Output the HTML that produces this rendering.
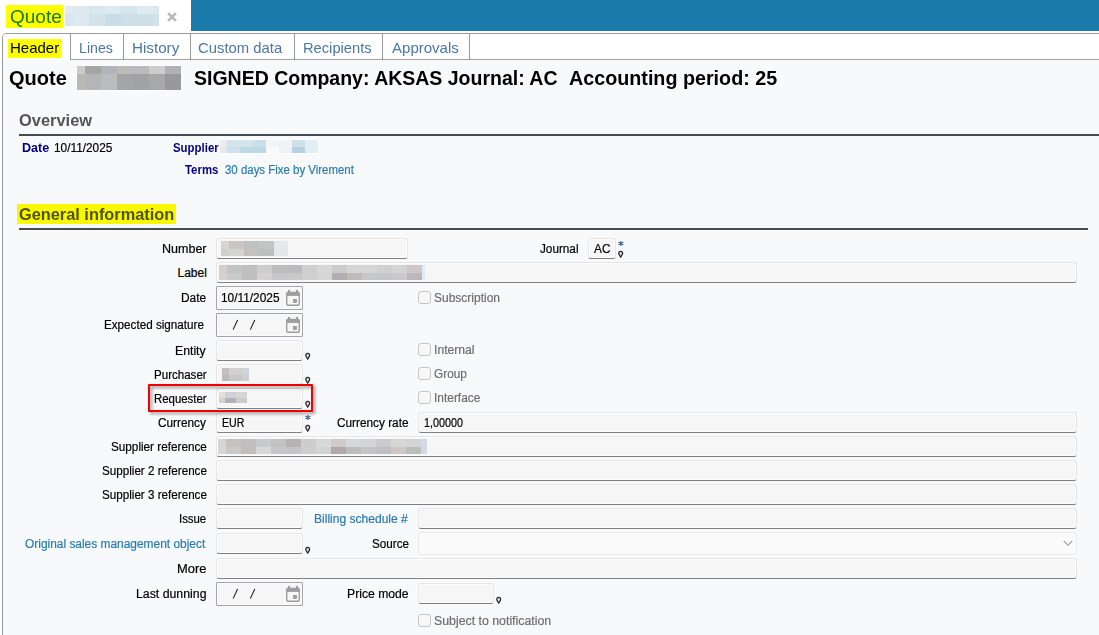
<!DOCTYPE html>
<html>
<head>
<meta charset="utf-8">
<title>Quote</title>
<style>
html,body{margin:0;padding:0;}
body{width:1099px;height:635px;overflow:hidden;background:#fff;position:relative;font-family:"Liberation Sans",sans-serif;}
.a{position:absolute;box-sizing:border-box;}
.t{position:absolute;white-space:pre;transform-origin:0 50%;display:block;}
.tb{position:absolute;box-sizing:border-box;background:#f6f6f6;border:1px solid #e6e6e6;border-bottom-color:#808080;border-radius:3px;box-shadow:inset 0 0 0 1px #fdfdfd;}
.dt{position:absolute;box-sizing:border-box;background:#f6f6f6;border:1px solid #a3a3aa;border-radius:1px;box-shadow:inset 0 0 0 1px #fbfbfb;}
.sel{position:absolute;box-sizing:border-box;background:#fafafa;border:1px solid #ebebeb;border-radius:3px;}
.cb{position:absolute;box-sizing:border-box;width:13px;height:13px;background:#f7f7f7;border:1px solid #c6c6c6;border-radius:3px;}
.px{position:absolute;}
svg{position:absolute;overflow:visible;}
.s{-webkit-text-stroke:0.2px currentColor;}
</style>
</head>
<body>
<!-- top application bar -->
<div class="a" style="left:191px;top:0;width:908px;height:31px;background:#1a7bab;"></div>
<div class="a" style="left:6px;top:5px;width:57px;height:23px;background:#ffff00;"></div>
<!-- close X -->
<svg style="left:166.5px;top:11.5px;" width="10" height="10" viewBox="0 0 10 10"><path d="M1.1 1.1 L8.9 8.9 M8.9 1.1 L1.1 8.9" stroke="#b9b9b9" stroke-width="2.7" fill="none"/></svg>

<!-- tab strip -->
<div class="a" style="left:70px;top:33px;width:1040px;height:27px;border-bottom:1px solid #a2a2a2;"></div>
<!-- content panel -->
<div class="a" style="left:2px;top:33px;width:1110px;height:620px;border-left:1px solid #969696;border-top:1px solid #9c9c9c;border-top-left-radius:5px;"></div>
<div class="a" style="left:3px;top:60px;width:1096px;height:575px;background:#f8f9fb;"></div>
<!-- active tab covers bottom line -->
<div class="a" style="left:3px;top:34px;width:67px;height:26px;background:#fff;border-top-left-radius:4px;"></div>
<div class="a" style="left:3px;top:59px;width:67px;height:1px;background:#fbfcfd;"></div>
<div class="a" style="left:8px;top:39px;width:53px;height:19px;background:#ffff00;"></div>
<!-- tab separators -->
<div class="a" style="left:70px;top:34px;width:1px;height:26px;background:#9a9a9a;"></div>
<div class="a" style="left:123px;top:34px;width:1px;height:26px;background:#9a9a9a;"></div>
<div class="a" style="left:190px;top:34px;width:1px;height:26px;background:#9a9a9a;"></div>
<div class="a" style="left:294px;top:34px;width:1px;height:26px;background:#9a9a9a;"></div>
<div class="a" style="left:382px;top:34px;width:1px;height:26px;background:#9a9a9a;"></div>
<div class="a" style="left:469px;top:34px;width:1px;height:26px;background:#9a9a9a;"></div>

<!-- section underlines -->
<div class="a" style="left:19px;top:134px;width:1080px;height:2px;background:#444b53;"></div>
<div class="a" style="left:17px;top:204px;width:159px;height:20px;background:#f8f900;"></div>
<div class="a" style="left:19px;top:228px;width:1069px;height:2px;background:#444b53;"></div>


<!-- form fields -->
<div class="tb" style="left:216px;top:238px;width:192px;height:21px;"></div>
<div class="tb" style="left:588px;top:238px;width:28px;height:21px;"></div>
<div class="tb" style="left:216px;top:262px;width:861px;height:21px;"></div>
<div class="dt" style="left:216px;top:286px;width:87px;height:24px;"></div>
<div class="dt" style="left:216px;top:313px;width:87px;height:24px;"></div>
<div class="tb" style="left:216px;top:340px;width:87px;height:21px;"></div>
<div class="tb" style="left:216px;top:364px;width:87px;height:21px;"></div>
<div class="tb" style="left:216px;top:388px;width:87px;height:21px;"></div>
<div class="tb" style="left:216px;top:412px;width:87px;height:21px;"></div>
<div class="tb" style="left:418px;top:412px;width:659px;height:21px;"></div>
<div class="tb" style="left:216px;top:436px;width:861px;height:21px;"></div>
<div class="tb" style="left:216px;top:460px;width:861px;height:21px;"></div>
<div class="tb" style="left:216px;top:484px;width:861px;height:21px;"></div>
<div class="tb" style="left:216px;top:508px;width:87px;height:21px;"></div>
<div class="tb" style="left:418px;top:508px;width:659px;height:21px;"></div>
<div class="tb" style="left:216px;top:533px;width:87px;height:21px;"></div>
<div class="sel" style="left:418px;top:532px;width:659px;height:23px;"></div>
<div class="tb" style="left:216px;top:558px;width:861px;height:21px;"></div>
<div class="dt" style="left:216px;top:582px;width:87px;height:24px;"></div>
<div class="tb" style="left:418px;top:583px;width:76px;height:21px;"></div>

<!-- BLURS -->
<div class="px" style="left:65px;top:6px;width:8px;height:8px;background:#e1ebf2"></div>
<div class="px" style="left:73px;top:6px;width:16px;height:8px;background:#dfe9f0"></div>
<div class="px" style="left:89px;top:6px;width:16px;height:8px;background:#d8e6ee"></div>
<div class="px" style="left:105px;top:6px;width:16px;height:8px;background:#deeaf0"></div>
<div class="px" style="left:121px;top:6px;width:16px;height:8px;background:#d5e5ed"></div>
<div class="px" style="left:137px;top:6px;width:16px;height:8px;background:#e0ebf1"></div>
<div class="px" style="left:153px;top:6px;width:6px;height:8px;background:#dce8f0"></div>
<div class="px" style="left:65px;top:14px;width:8px;height:12px;background:#d9e6ef"></div>
<div class="px" style="left:73px;top:14px;width:16px;height:12px;background:#dfe9f1"></div>
<div class="px" style="left:89px;top:14px;width:16px;height:12px;background:#d2e3eb"></div>
<div class="px" style="left:105px;top:14px;width:16px;height:12px;background:#c8dde8"></div>
<div class="px" style="left:121px;top:14px;width:16px;height:12px;background:#cddfe8"></div>
<div class="px" style="left:137px;top:14px;width:16px;height:12px;background:#cddfe8"></div>
<div class="px" style="left:153px;top:14px;width:6px;height:12px;background:#d3e3ec"></div>
<div class="px" style="left:76px;top:65px;width:106px;height:26px;background:#fdfdfe"></div>
<div class="px" style="left:77px;top:66px;width:8px;height:8px;background:#cdc9c6"></div>
<div class="px" style="left:85px;top:66px;width:16px;height:8px;background:#a4a6a5"></div>
<div class="px" style="left:101px;top:66px;width:16px;height:8px;background:#b3b4b9"></div>
<div class="px" style="left:117px;top:66px;width:16px;height:8px;background:#bbbbb9"></div>
<div class="px" style="left:133px;top:66px;width:16px;height:8px;background:#b9babd"></div>
<div class="px" style="left:149px;top:66px;width:16px;height:8px;background:#cccccc"></div>
<div class="px" style="left:165px;top:66px;width:16px;height:8px;background:#b1b2b5"></div>
<div class="px" style="left:77px;top:74px;width:8px;height:16px;background:#bab8b6"></div>
<div class="px" style="left:85px;top:74px;width:16px;height:16px;background:#b5b5b7"></div>
<div class="px" style="left:101px;top:74px;width:16px;height:16px;background:#bbbcbe"></div>
<div class="px" style="left:117px;top:74px;width:16px;height:16px;background:#a5a5a7"></div>
<div class="px" style="left:133px;top:74px;width:16px;height:16px;background:#a1a2a4"></div>
<div class="px" style="left:149px;top:74px;width:16px;height:16px;background:#a8a8a8"></div>
<div class="px" style="left:165px;top:74px;width:16px;height:16px;background:#99999b"></div>
<div class="px" style="left:219px;top:139px;width:100px;height:15px;background:#fdfdfe"></div>
<div class="px" style="left:220px;top:140px;width:7px;height:7px;background:#ebecf1"></div>
<div class="px" style="left:227px;top:140px;width:13px;height:7px;background:#d3e4ec"></div>
<div class="px" style="left:240px;top:140px;width:13px;height:7px;background:#d6e5ec"></div>
<div class="px" style="left:253px;top:140px;width:13px;height:7px;background:#cbdfe9"></div>
<div class="px" style="left:266px;top:140px;width:13px;height:7px;background:#f2f5fa"></div>
<div class="px" style="left:279px;top:140px;width:13px;height:7px;background:#f1f2f6"></div>
<div class="px" style="left:292px;top:140px;width:13px;height:7px;background:#cfe0e9"></div>
<div class="px" style="left:305px;top:140px;width:13px;height:7px;background:#e6eef5"></div>
<div class="px" style="left:220px;top:147px;width:7px;height:6px;background:#e7e8ed"></div>
<div class="px" style="left:227px;top:147px;width:13px;height:6px;background:#cde1ea"></div>
<div class="px" style="left:240px;top:147px;width:13px;height:6px;background:#bed8e5"></div>
<div class="px" style="left:253px;top:147px;width:13px;height:6px;background:#bed8e5"></div>
<div class="px" style="left:266px;top:147px;width:13px;height:6px;background:#f9fafc"></div>
<div class="px" style="left:279px;top:147px;width:13px;height:6px;background:#eff0f4"></div>
<div class="px" style="left:292px;top:147px;width:13px;height:6px;background:#b5d0e2"></div>
<div class="px" style="left:305px;top:147px;width:13px;height:6px;background:#e3edf4"></div>
<div class="px" style="left:221px;top:241px;width:8px;height:8px;background:#d8d6d4"></div>
<div class="px" style="left:229px;top:241px;width:15px;height:8px;background:#cbc6c5"></div>
<div class="px" style="left:244px;top:241px;width:15px;height:8px;background:#bfc1c0"></div>
<div class="px" style="left:259px;top:241px;width:15px;height:8px;background:#c3c4c6"></div>
<div class="px" style="left:274px;top:241px;width:14px;height:8px;background:#e7e8ea"></div>
<div class="px" style="left:221px;top:249px;width:8px;height:7px;background:#d0cecc"></div>
<div class="px" style="left:229px;top:249px;width:15px;height:7px;background:#d4d4d4"></div>
<div class="px" style="left:244px;top:249px;width:15px;height:7px;background:#c4c2bf"></div>
<div class="px" style="left:259px;top:249px;width:15px;height:7px;background:#bcbec1"></div>
<div class="px" style="left:274px;top:249px;width:14px;height:7px;background:#e6e7e9"></div>
<div class="px" style="left:219px;top:265px;width:8px;height:8px;background:#d4cfcd"></div>
<div class="px" style="left:227px;top:265px;width:15px;height:8px;background:#c3c3c3"></div>
<div class="px" style="left:242px;top:265px;width:15px;height:8px;background:#c0bebf"></div>
<div class="px" style="left:257px;top:265px;width:15px;height:8px;background:#cdcdcd"></div>
<div class="px" style="left:272px;top:265px;width:15px;height:8px;background:#bfbdbb"></div>
<div class="px" style="left:287px;top:265px;width:15px;height:8px;background:#bbbbbd"></div>
<div class="px" style="left:302px;top:265px;width:15px;height:8px;background:#d0cecf"></div>
<div class="px" style="left:317px;top:265px;width:15px;height:8px;background:#d7d7d7"></div>
<div class="px" style="left:332px;top:265px;width:15px;height:8px;background:#cccacb"></div>
<div class="px" style="left:347px;top:265px;width:15px;height:8px;background:#d6d5d5"></div>
<div class="px" style="left:362px;top:265px;width:15px;height:8px;background:#d6d5d5"></div>
<div class="px" style="left:377px;top:265px;width:15px;height:8px;background:#d0d0d0"></div>
<div class="px" style="left:392px;top:265px;width:15px;height:8px;background:#d4d4d4"></div>
<div class="px" style="left:407px;top:265px;width:15px;height:8px;background:#cdc8c6"></div>
<div class="px" style="left:422px;top:265px;width:2.5px;height:8px;background:#e0eaf5"></div>
<div class="px" style="left:219px;top:273px;width:8px;height:7px;background:#d5cfcd"></div>
<div class="px" style="left:227px;top:273px;width:15px;height:7px;background:#cacaca"></div>
<div class="px" style="left:242px;top:273px;width:15px;height:7px;background:#bfbfbf"></div>
<div class="px" style="left:257px;top:273px;width:15px;height:7px;background:#d3d1d2"></div>
<div class="px" style="left:272px;top:273px;width:15px;height:7px;background:#c7c7c9"></div>
<div class="px" style="left:287px;top:273px;width:15px;height:7px;background:#c8c8c8"></div>
<div class="px" style="left:302px;top:273px;width:15px;height:7px;background:#d0cfd0"></div>
<div class="px" style="left:317px;top:273px;width:15px;height:7px;background:#d6d5d6"></div>
<div class="px" style="left:332px;top:273px;width:15px;height:7px;background:#b0aeb1"></div>
<div class="px" style="left:347px;top:273px;width:15px;height:7px;background:#c0bbb9"></div>
<div class="px" style="left:362px;top:273px;width:15px;height:7px;background:#c8c7c8"></div>
<div class="px" style="left:377px;top:273px;width:15px;height:7px;background:#c5c6c8"></div>
<div class="px" style="left:392px;top:273px;width:15px;height:7px;background:#cac8cb"></div>
<div class="px" style="left:407px;top:273px;width:15px;height:7px;background:#bcb8b9"></div>
<div class="px" style="left:422px;top:273px;width:2.5px;height:7px;background:#e0eaf5"></div>
<div class="px" style="left:218px;top:439px;width:8px;height:8px;background:#d6d5d3"></div>
<div class="px" style="left:226px;top:439px;width:15px;height:8px;background:#c5c3c1"></div>
<div class="px" style="left:241px;top:439px;width:15px;height:8px;background:#c2bebd"></div>
<div class="px" style="left:256px;top:439px;width:15px;height:8px;background:#c6c9ce"></div>
<div class="px" style="left:271px;top:439px;width:15px;height:8px;background:#c4c2c1"></div>
<div class="px" style="left:286px;top:439px;width:15px;height:8px;background:#b5b3b4"></div>
<div class="px" style="left:301px;top:439px;width:15px;height:8px;background:#cecccd"></div>
<div class="px" style="left:316px;top:439px;width:15px;height:8px;background:#d8d8d8"></div>
<div class="px" style="left:331px;top:439px;width:15px;height:8px;background:#d0cac9"></div>
<div class="px" style="left:346px;top:439px;width:15px;height:8px;background:#d6d7d9"></div>
<div class="px" style="left:361px;top:439px;width:15px;height:8px;background:#d5d5d5"></div>
<div class="px" style="left:376px;top:439px;width:15px;height:8px;background:#cbcbcd"></div>
<div class="px" style="left:391px;top:439px;width:15px;height:8px;background:#d8d6d3"></div>
<div class="px" style="left:406px;top:439px;width:15px;height:8px;background:#d3d4d3"></div>
<div class="px" style="left:421px;top:439px;width:6px;height:8px;background:#d7d6e4"></div>
<div class="px" style="left:218px;top:447px;width:8px;height:7px;background:#d8d6d4"></div>
<div class="px" style="left:226px;top:447px;width:15px;height:7px;background:#cbcac9"></div>
<div class="px" style="left:241px;top:447px;width:15px;height:7px;background:#c2bebc"></div>
<div class="px" style="left:256px;top:447px;width:15px;height:7px;background:#d8d8d8"></div>
<div class="px" style="left:271px;top:447px;width:15px;height:7px;background:#c6c6c8"></div>
<div class="px" style="left:286px;top:447px;width:15px;height:7px;background:#c5c5c7"></div>
<div class="px" style="left:301px;top:447px;width:15px;height:7px;background:#cfcdce"></div>
<div class="px" style="left:316px;top:447px;width:15px;height:7px;background:#d3d3d5"></div>
<div class="px" style="left:331px;top:447px;width:15px;height:7px;background:#b0a9a8"></div>
<div class="px" style="left:346px;top:447px;width:15px;height:7px;background:#bcbcbc"></div>
<div class="px" style="left:361px;top:447px;width:15px;height:7px;background:#c8c4c5"></div>
<div class="px" style="left:376px;top:447px;width:15px;height:7px;background:#bfbfc4"></div>
<div class="px" style="left:391px;top:447px;width:15px;height:7px;background:#cdc7c8"></div>
<div class="px" style="left:406px;top:447px;width:15px;height:7px;background:#bcc0bd"></div>
<div class="px" style="left:421px;top:447px;width:6px;height:7px;background:#d7d6e4"></div>
<div class="px" style="left:222px;top:368px;width:7px;height:7px;background:#c5bebd"></div>
<div class="px" style="left:229px;top:368px;width:13px;height:7px;background:#d3d0cf"></div>
<div class="px" style="left:242px;top:368px;width:7px;height:7px;background:#ced5da"></div>
<div class="px" style="left:222px;top:375px;width:7px;height:6px;background:#bfb9b9"></div>
<div class="px" style="left:229px;top:375px;width:13px;height:6px;background:#c6c7cb"></div>
<div class="px" style="left:242px;top:375px;width:7px;height:6px;background:#cdd1d3"></div>
<div class="px" style="left:219px;top:392px;width:6px;height:6px;background:#e3dedb"></div>
<div class="px" style="left:225px;top:392px;width:11px;height:6px;background:#d0d1d5"></div>
<div class="px" style="left:236px;top:392px;width:11px;height:6px;background:#d6d6d6"></div>
<div class="px" style="left:219px;top:398px;width:6px;height:5px;background:#d5d2cd"></div>
<div class="px" style="left:225px;top:398px;width:11px;height:5px;background:#b2b2ba"></div>
<div class="px" style="left:236px;top:398px;width:11px;height:5px;background:#cbcbc9"></div>

<!-- select chevron -->
<svg style="left:1063px;top:540px;" width="10" height="7" viewBox="0 0 10 7"><path d="M0.8 1 L5 5.2 L9.2 1" stroke="#a2a2a2" stroke-width="1.1" fill="none"/></svg>

<!-- checkboxes -->
<div class="cb" style="left:418px;top:291px;"></div>
<div class="cb" style="left:418px;top:343px;"></div>
<div class="cb" style="left:418px;top:367px;"></div>
<div class="cb" style="left:418px;top:391px;"></div>
<div class="cb" style="left:418px;top:614px;"></div>

<!-- calendar icons -->
<svg class="cal" style="left:286px;top:290px;" width="14" height="16" viewBox="0 0 14 16"><use href="#calg"/></svg>
<svg class="cal" style="left:286px;top:317px;" width="14" height="16" viewBox="0 0 14 16"><use href="#calg"/></svg>
<svg class="cal" style="left:286px;top:586px;" width="14" height="16" viewBox="0 0 14 16"><use href="#calg"/></svg>

<!-- pins -->
<svg style="left:305px;top:353.3px;" width="6" height="7" viewBox="0 0 6 7"><use href="#pin"/></svg>
<svg style="left:305px;top:377.3px;" width="6" height="7" viewBox="0 0 6 7"><use href="#pin"/></svg>
<svg style="left:305px;top:401.3px;" width="6" height="7" viewBox="0 0 6 7"><use href="#pin"/></svg>
<svg style="left:305px;top:425.3px;" width="6" height="7" viewBox="0 0 6 7"><use href="#pin"/></svg>
<svg style="left:305px;top:547px;" width="6" height="7" viewBox="0 0 6 7"><use href="#pin"/></svg>
<svg style="left:496px;top:596.6px;" width="6" height="7" viewBox="0 0 6 7"><use href="#pin"/></svg>
<svg style="left:618px;top:251.3px;" width="6" height="7" viewBox="0 0 6 7"><use href="#pin"/></svg>

<!-- asterisks -->
<svg style="left:304.5px;top:415px;" width="6" height="6" viewBox="0 0 6 6"><use href="#ast"/></svg>
<svg style="left:617.5px;top:241px;" width="6" height="6" viewBox="0 0 6 6"><use href="#ast"/></svg>

<svg width="0" height="0" style="left:0;top:0;">
<defs>
<g id="calg">
  <rect x="0.7" y="2.4" width="12.6" height="12.8" rx="1.5" fill="none" stroke="#9e9e9e" stroke-width="1.4"/>
  <rect x="0.7" y="2.4" width="12.6" height="3.5" fill="#9e9e9e"/>
  <rect x="1.9" y="0" width="2.1" height="3" fill="#9e9e9e"/>
  <rect x="10" y="0" width="2.1" height="3" fill="#9e9e9e"/>
  <rect x="7" y="9" width="3.9" height="3.9" fill="#9e9e9e"/>
</g>
<g id="pin">
  <path d="M2.7 6.2 L0.85 2.9 A1.95 1.95 0 1 1 4.55 2.9 Z" fill="#dedede" stroke="#242424" stroke-width="1.2" stroke-linejoin="round"/>
</g>
<g id="ast">
  <path d="M2.9 0.1 V5 M0.4 1.25 L5.4 3.85 M5.4 1.25 L0.4 3.85" stroke="#24578c" stroke-width="1.05" fill="none"/>
</g>
</defs>
</svg>

<!-- date slashes -->
<svg style="left:0;top:0;" width="1099" height="635"><g stroke="#1a1a1a" stroke-width="1.05" fill="none">
<path d="M233.1 329.6 L237.6 320 M250.3 329.6 L254.8 320"/>
<path d="M233.1 598.6 L237.6 589 M250.3 598.6 L254.8 589"/>
</g></svg>
<!-- red highlight rectangle -->
<div class="a" style="left:148px;top:384px;width:165px;height:28px;border:2px solid #f20000;border-radius:1px;filter:drop-shadow(2.5px 2.5px 1.8px rgba(0,0,0,.42));"></div>

<!-- TEXT -->
<span class="t" style="left:9.82px;top:7px;font-size:18px;line-height:20px;height:20px;transform:scaleX(1.0547);color:#1a7b00;">Quote</span>
<span class="t" style="left:9.83px;top:39px;font-size:15px;line-height:17px;height:17px;transform:scaleX(0.9993);">Header</span>
<span class="t" style="left:78.70px;top:39px;font-size:15px;line-height:17px;height:17px;transform:scaleX(0.9454);color:#4b76a8;">Lines</span>
<span class="t" style="left:131.62px;top:39px;font-size:15px;line-height:17px;height:17px;transform:scaleX(1.0125);color:#4b76a8;">History</span>
<span class="t" style="left:198.28px;top:39px;font-size:15px;line-height:17px;height:17px;transform:scaleX(0.9897);color:#4b76a8;">Custom data</span>
<span class="t" style="left:302.56px;top:39px;font-size:15px;line-height:17px;height:17px;transform:scaleX(0.9790);color:#4b76a8;">Recipients</span>
<span class="t" style="left:391.60px;top:39px;font-size:15px;line-height:17px;height:17px;transform:scaleX(1.0020);color:#4b76a8;">Approvals</span>
<span class="t" style="left:8.88px;top:66px;font-size:20.5px;line-height:23px;height:23px;transform:scaleX(0.9780);font-weight:700;">Quote</span>
<span class="t" style="left:193.97px;top:66px;font-size:20.5px;line-height:23px;height:23px;transform:scaleX(0.9508);font-weight:700;">SIGNED Company: AKSAS Journal: AC</span>
<span class="t" style="left:568.62px;top:66px;font-size:20.5px;line-height:23px;height:23px;transform:scaleX(0.9620);font-weight:700;">Accounting period: 25</span>
<span class="t" style="left:18.64px;top:111px;font-size:16.5px;line-height:18px;height:18px;transform:scaleX(0.9963);font-weight:700;color:#555;">Overview</span>
<span class="t" style="left:19.04px;top:205px;font-size:16.5px;line-height:18px;height:18px;transform:scaleX(0.9899);font-weight:700;color:#525300;">General information</span>
<span class="t" style="left:21.83px;top:141px;font-size:12px;line-height:14px;height:14px;transform:scaleX(1.0470);font-weight:700;color:#000080;">Date</span>
<span class="t s" style="left:53.68px;top:141px;font-size:12px;line-height:14px;height:14px;transform:scaleX(0.9856);">10/11/2025</span>
<span class="t" style="left:172.88px;top:141px;font-size:12px;line-height:14px;height:14px;transform:scaleX(0.9516);font-weight:700;color:#000080;">Supplier</span>
<span class="t" style="left:185.44px;top:163px;font-size:12px;line-height:14px;height:14px;transform:scaleX(0.9507);font-weight:700;color:#000080;">Terms</span>
<span class="t s" style="left:225.02px;top:163px;font-size:12px;line-height:14px;height:14px;transform:scaleX(0.9535);color:#2a7cb0;">30 days Fixe by Virement</span>
<span class="t s" style="left:161.66px;top:242px;font-size:12px;line-height:14px;height:14px;transform:scaleX(1.0434);">Number</span>
<span class="t s" style="left:177.50px;top:266px;font-size:12px;line-height:14px;height:14px;transform:scaleX(1.0000);">Label</span>
<span class="t s" style="left:181.41px;top:291px;font-size:12px;line-height:14px;height:14px;transform:scaleX(0.9902);">Date</span>
<span class="t s" style="left:103.83px;top:318px;font-size:12px;line-height:14px;height:14px;transform:scaleX(0.9727);">Expected signature</span>
<span class="t s" style="left:175.38px;top:344px;font-size:12px;line-height:14px;height:14px;transform:scaleX(1.0207);">Entity</span>
<span class="t s" style="left:153.54px;top:368px;font-size:12px;line-height:14px;height:14px;transform:scaleX(0.9626);">Purchaser</span>
<span class="t s" style="left:153.55px;top:392px;font-size:12px;line-height:14px;height:14px;transform:scaleX(0.9508);">Requester</span>
<span class="t s" style="left:158.14px;top:416px;font-size:12px;line-height:14px;height:14px;transform:scaleX(0.9833);">Currency</span>
<span class="t s" style="left:110.71px;top:440px;font-size:12px;line-height:14px;height:14px;transform:scaleX(0.9773);">Supplier reference</span>
<span class="t s" style="left:101.61px;top:464px;font-size:12px;line-height:14px;height:14px;transform:scaleX(0.9710);">Supplier 2 reference</span>
<span class="t s" style="left:101.61px;top:488px;font-size:12px;line-height:14px;height:14px;transform:scaleX(0.9710);">Supplier 3 reference</span>
<span class="t s" style="left:179.29px;top:512px;font-size:12px;line-height:14px;height:14px;transform:scaleX(0.9481);">Issue</span>
<span class="t s" style="left:25.10px;top:537px;font-size:12px;line-height:14px;height:14px;transform:scaleX(0.9932);color:#2a7cb0;">Original sales management object</span>
<span class="t s" style="left:177.12px;top:562px;font-size:12px;line-height:14px;height:14px;transform:scaleX(1.0761);">More</span>
<span class="t s" style="left:136.27px;top:587px;font-size:12px;line-height:14px;height:14px;transform:scaleX(1.0254);">Last dunning</span>
<span class="t s" style="left:220.88px;top:291px;font-size:12px;line-height:14px;height:14px;transform:scaleX(0.9890);">10/11/2025</span>
<span class="t s" style="left:221.61px;top:416px;font-size:12px;line-height:14px;height:14px;transform:scaleX(0.8873);">EUR</span>
<span class="t s" style="left:423.95px;top:416px;font-size:12px;line-height:14px;height:14px;transform:scaleX(0.8964);">1,00000</span>
<span class="t s" style="left:594.10px;top:242px;font-size:12px;line-height:14px;height:14px;transform:scaleX(0.9897);">AC</span>
<span class="t s" style="left:539.84px;top:242px;font-size:12px;line-height:14px;height:14px;transform:scaleX(0.9783);">Journal</span>
<span class="t s" style="left:337.04px;top:416px;font-size:12px;line-height:14px;height:14px;transform:scaleX(0.9832);">Currency rate</span>
<span class="t s" style="left:313.50px;top:512px;font-size:12px;line-height:14px;height:14px;transform:scaleX(1.0040);color:#2a7cb0;">Billing schedule #</span>
<span class="t s" style="left:371.91px;top:537px;font-size:12px;line-height:14px;height:14px;transform:scaleX(0.9730);">Source</span>
<span class="t s" style="left:347.28px;top:587px;font-size:12px;line-height:14px;height:14px;transform:scaleX(1.0158);">Price mode</span>
<span class="t s" style="left:434.10px;top:291px;font-size:12px;line-height:14px;height:14px;transform:scaleX(0.9995);color:#6e6e6e;">Subscription</span>
<span class="t s" style="left:434.12px;top:343px;font-size:12px;line-height:14px;height:14px;transform:scaleX(1.0132);color:#6e6e6e;">Internal</span>
<span class="t s" style="left:433.94px;top:367px;font-size:12px;line-height:14px;height:14px;transform:scaleX(0.9855);color:#6e6e6e;">Group</span>
<span class="t s" style="left:434.14px;top:391px;font-size:12px;line-height:14px;height:14px;transform:scaleX(0.9933);color:#6e6e6e;">Interface</span>
<span class="t s" style="left:433.89px;top:614px;font-size:12px;line-height:14px;height:14px;transform:scaleX(1.0272);color:#6e6e6e;">Subject to notification</span>
</body>
</html>
